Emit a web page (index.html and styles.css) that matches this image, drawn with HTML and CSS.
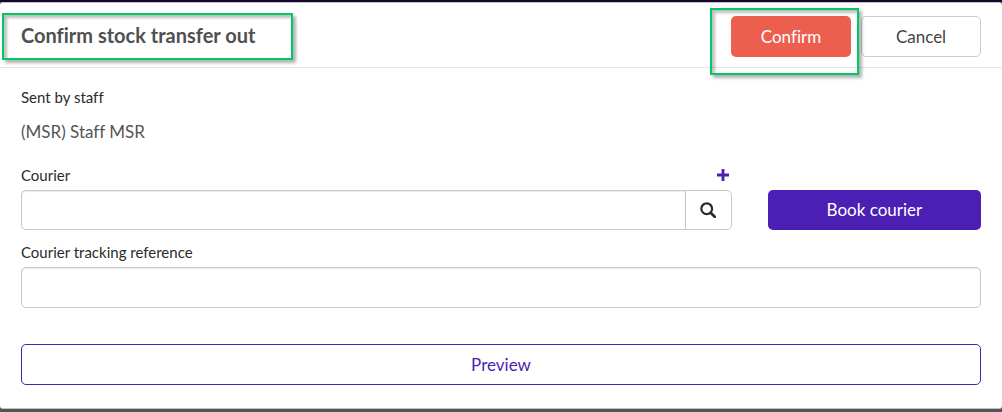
FILE: index.html
```html
<!DOCTYPE html>
<html lang="en">
<head>
    <meta charset="UTF-8">
    <meta name="viewport" content="width=device-width, initial-scale=1.0">
    <title>Confirm stock transfer out</title>
    <link rel="stylesheet" href="styles.css">
</head>
<body>
    <form class="modal">
        <header class="modal-header">
            <h1 class="modal-title highlight">Confirm stock transfer out</h1>
            <div class="modal-actions">
                <div class="highlight highlight-action">
                    <button type="submit" class="btn btn-confirm">Confirm</button>
                </div>
                <button type="button" class="btn btn-cancel">Cancel</button>
            </div>
        </header>

        <div class="modal-body">
            <dl class="staff">
                <dt class="label">Sent by staff</dt>
                <dd class="staff-name">(MSR) Staff MSR</dd>
            </dl>

            <div class="courier-row">
                <div class="field">
                    <div class="label-row">
                        <label class="label" for="courier">Courier</label>
                        <button type="button" class="add-button" aria-label="Add courier">
                            <svg width="12" height="12" viewBox="0 0 11 11" fill="currentColor">
                                <path d="M4.2 0h2.6v4.2H11v2.6H6.8V11H4.2V6.8H0V4.2h4.2z"/>
                            </svg>
                        </button>
                    </div>
                    <div class="input-group">
                        <input type="text" id="courier" class="input">
                        <button type="button" class="search-button" aria-label="Search couriers">
                            <svg width="16" height="16" viewBox="0 0 16 16" fill="none" stroke="currentColor">
                                <circle cx="6.7" cy="6.7" r="5.4" stroke-width="2.2"/>
                                <path d="M10.7 10.7l4 4" stroke-width="2.7" stroke-linecap="round"/>
                            </svg>
                        </button>
                    </div>
                </div>
                <button type="button" class="btn btn-book">Book courier</button>
            </div>

            <div class="field">
                <label class="label" for="tracking">Courier tracking reference</label>
                <input type="text" id="tracking" class="input">
            </div>

            <button type="button" class="btn btn-preview">Preview</button>
        </div>
    </form>
</body>
</html>
```
FILE: styles.css
```css
* {
    margin: 0;
    padding: 0;
    box-sizing: border-box;
}

body {
    font-family: Lato, 'Open Sans', sans-serif;
    font-size: 17px;
    font-variant-ligatures: none;
    line-height: 24px;
    color: #555;
    background: #555354;
    border-top: 2px solid #14062b;
    min-height: 100vh;
    padding-bottom: 3px;
}

button,
input {
    font: inherit;
    font-variant-ligatures: none;
}

button {
    cursor: pointer;
}

.modal {
    background: white;
    border: 1px solid #c4c2c6;
    border-width: 1px 0;
    border-radius: 3px;
}

.modal-header {
    display: flex;
    justify-content: space-between;
    align-items: flex-start;
    padding: 13px 21px 10px;
    border-bottom: 1px solid #e5e5e5;
}

.modal-title {
    font-size: 20px;
    font-weight: 700;
    line-height: 24px;
    margin-top: 7px;
    color: #505050;
}

.modal-actions {
    display: flex;
    gap: 10px;
}

/* green callout frame drawn around an element */
.highlight {
    position: relative;
}

.highlight::after {
    content: "";
    position: absolute;
    inset: -10px -38px -13px -19px;
    border: 2px solid #00c864;
    box-shadow: 3px 3px 3px rgba(0, 0, 0, 0.3), inset 3px 3px 3px rgba(0, 0, 0, 0.25);
    pointer-events: none;
}

.highlight-action::after {
    inset: -8px -8px -18px -21px;
}

.btn {
    height: 41px;
    border: 1px solid transparent;
    border-radius: 5px;
    background: white;
}

.btn-confirm,
.btn-cancel {
    width: 120px;
}

.btn-confirm {
    display: block;
    background: #ec5f4f;
    color: white;
}

.btn-cancel {
    border-color: #ccc;
    color: #444;
}

.modal-body {
    padding: 19px 21px 23px;
}

.label {
    display: block;
    font-size: 15px;
    line-height: 20px;
    color: #2b2b2b;
}

.staff-name {
    margin-top: 13px;
}

.courier-row {
    display: grid;
    grid-template-columns: 10fr 3fr;
    gap: 36px;
    align-items: end;
    margin: 21px 0 12px;
}

.label-row {
    display: flex;
    justify-content: space-between;
    align-items: center;
}

.add-button {
    display: flex;
    padding: 0 3px;
    border: none;
    background: none;
    color: #4b1eb4;
}

.input-group {
    display: flex;
    margin-top: 5px;
}

.input {
    display: block;
    width: 100%;
    height: 41px;
    margin-top: 5px;
    padding: 8px 12px;
    border: 1px solid #c8c8c8;
    border-radius: 5px;
    box-shadow: inset 0 1px 1px rgba(0, 0, 0, 0.08);
    color: #555;
}

.input-group .input {
    flex: 1;
    height: 40px;
    margin-top: 0;
    border-right: none;
    border-radius: 5px 0 0 5px;
}

.search-button {
    display: flex;
    align-items: center;
    justify-content: center;
    width: 47px;
    border: 1px solid #c8c8c8;
    border-radius: 0 5px 5px 0;
    background: white;
    color: #2b2b2b;
}

.btn-book {
    height: 40px;
    background: #4b1eb4;
    color: white;
}

.btn-preview {
    display: block;
    width: 100%;
    margin-top: 36px;
    border-color: #4b1eb4;
    color: #4b1eb4;
}
```
